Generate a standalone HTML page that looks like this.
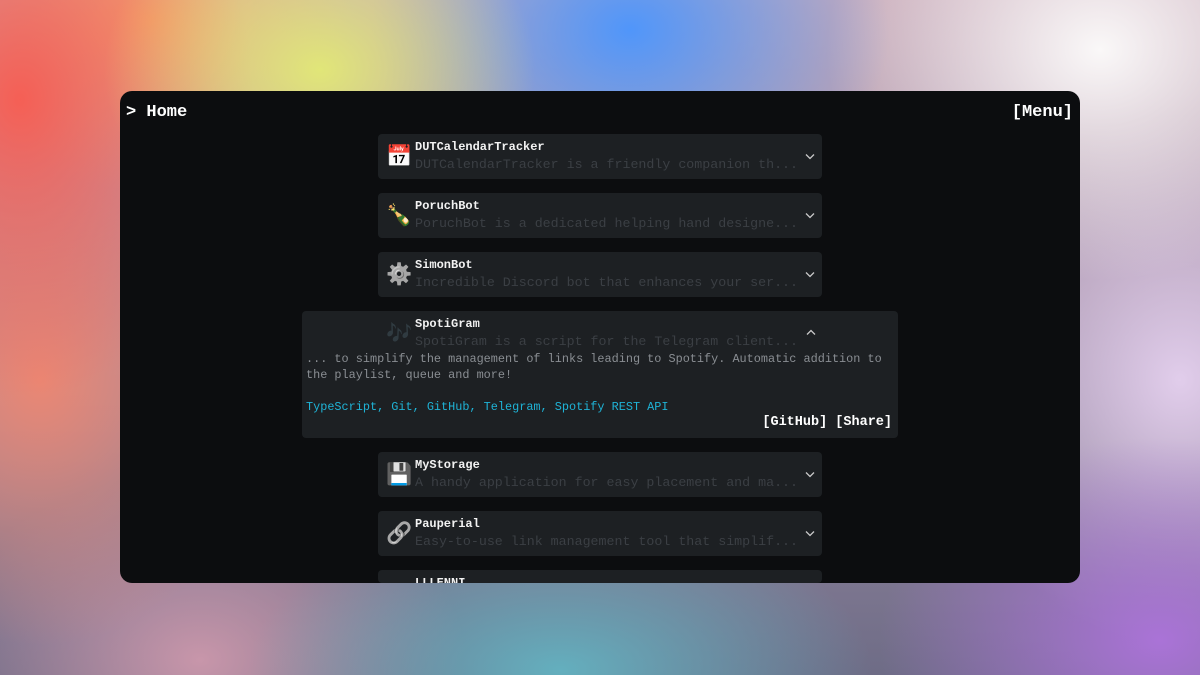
<!DOCTYPE html>
<html><head><meta charset="utf-8"><style>
*{margin:0;padding:0;box-sizing:border-box}
html,body{width:1200px;height:675px;overflow:hidden}
body{position:relative;font-family:"Liberation Mono",monospace;
background:
radial-gradient(ellipse 300px 240px at 320px 70px,rgba(225,230,120,1),transparent 72%),
radial-gradient(ellipse 360px 280px at 630px 30px,rgba(80,150,250,1),transparent 72%),
radial-gradient(ellipse 380px 320px at 1100px 50px,rgba(250,248,248,1),transparent 72%),
radial-gradient(ellipse 300px 380px at 20px 100px,rgba(245,95,85,1),transparent 78%),
radial-gradient(ellipse 300px 340px at 40px 380px,rgba(235,135,115,1),transparent 78%),
radial-gradient(ellipse 260px 220px at 150px 20px,rgba(245,170,110,1),transparent 78%),
radial-gradient(ellipse 360px 260px at 1160px 640px,rgba(170,115,215,1),transparent 78%),
radial-gradient(ellipse 400px 200px at 560px 670px,rgba(100,175,190,1),transparent 78%),
radial-gradient(ellipse 300px 340px at 1180px 380px,rgba(225,205,235,1),transparent 78%),
radial-gradient(ellipse 340px 240px at 200px 660px,rgba(200,150,170,1),transparent 78%),
linear-gradient(180deg,#c7a9b8 0%,#9c8ca4 55%,#6e6c86 100%);}
.win{position:absolute;left:120px;top:91px;width:960px;height:492px;background:#0c0d0f;border-radius:12px;overflow:hidden}
.hdr{position:absolute;top:12px;font-size:17px;color:#fff;font-weight:bold}
.card{position:absolute;left:258px;width:444px;height:45px;background:#1d2023;border-radius:4px;overflow:hidden}
.ic{position:absolute;left:8px;top:10px;width:26px;height:26px;font-size:21px;line-height:26px;text-align:center;font-family:"Noto Color Emoji","DejaVu Sans",sans-serif}
.t{position:absolute;left:37px;top:6px;font-size:12px;font-weight:bold;color:#f2f2f2;white-space:nowrap}
.d{position:absolute;left:37px;top:23px;font-size:13.3px;color:#3b3f44;white-space:nowrap}
.ch{position:absolute;right:7px;top:19px;width:10px;height:7px}
</style></head><body>
<div class="win">
<div class="hdr" style="left:6px">&gt; Home</div>
<div class="hdr" style="right:7px">[Menu]</div>

<div class="card" style="top:43px"><div class="ic">📅</div><div class="t">DUTCalendarTracker</div><div class="d">DUTCalendarTracker is a friendly companion th...</div><svg class="ch" viewBox="0 0 10 7"><path d="M1 1.5L5 5.5L9 1.5" fill="none" stroke="#c8c8c8" stroke-width="1.3"/></svg></div>
<div class="card" style="top:102px"><div class="ic">🍾</div><div class="t">PoruchBot</div><div class="d">PoruchBot is a dedicated helping hand designe...</div><svg class="ch" viewBox="0 0 10 7"><path d="M1 1.5L5 5.5L9 1.5" fill="none" stroke="#c8c8c8" stroke-width="1.3"/></svg></div>
<div class="card" style="top:161px"><div class="ic" style="filter:grayscale(1)">⚙️</div><div class="t">SimonBot</div><div class="d">Incredible Discord bot that enhances your ser...</div><svg class="ch" viewBox="0 0 10 7"><path d="M1 1.5L5 5.5L9 1.5" fill="none" stroke="#c8c8c8" stroke-width="1.3"/></svg></div>

<div class="card" style="top:220px;left:182px;width:596px;height:127px">
<div class="ic" style="left:84px;opacity:.35">🎶</div>
<div class="t" style="left:113px">SpotiGram</div>
<div class="d" style="left:113px">SpotiGram is a script for the Telegram client...</div>
<svg class="ch" style="right:82px;top:18px" viewBox="0 0 10 7"><path d="M1 5.5L5 1.5L9 5.5" fill="none" stroke="#c8c8c8" stroke-width="1.3"/></svg>
<div style="position:absolute;left:4px;top:40px;width:590px;font-size:11.85px;line-height:16px;color:#8a8e93">... to simplify the management of links leading to Spotify. Automatic addition to the playlist, queue and more!</div>
<div style="position:absolute;left:4px;top:89px;font-size:11.85px;color:#1fb3d6">TypeScript, Git, GitHub, Telegram, Spotify REST API</div>
<div style="position:absolute;right:6px;top:104px;font-size:13.5px;font-weight:bold;color:#fff">[GitHub] [Share]</div>
</div>

<div class="card" style="top:361px"><div class="ic">💾</div><div class="t">MyStorage</div><div class="d">A handy application for easy placement and ma...</div><svg class="ch" viewBox="0 0 10 7"><path d="M1 1.5L5 5.5L9 1.5" fill="none" stroke="#c8c8c8" stroke-width="1.3"/></svg></div>
<div class="card" style="top:420px"><div class="ic" style="filter:grayscale(1)">🔗</div><div class="t">Pauperial</div><div class="d">Easy-to-use link management tool that simplif...</div><svg class="ch" viewBox="0 0 10 7"><path d="M1 1.5L5 5.5L9 1.5" fill="none" stroke="#c8c8c8" stroke-width="1.3"/></svg></div>
<div class="card" style="top:479px;height:13px"><div class="ic" style="color:#e0a020;font-size:12px">▼</div><div class="t">LLLENNI</div></div>
</div>
</body></html>
